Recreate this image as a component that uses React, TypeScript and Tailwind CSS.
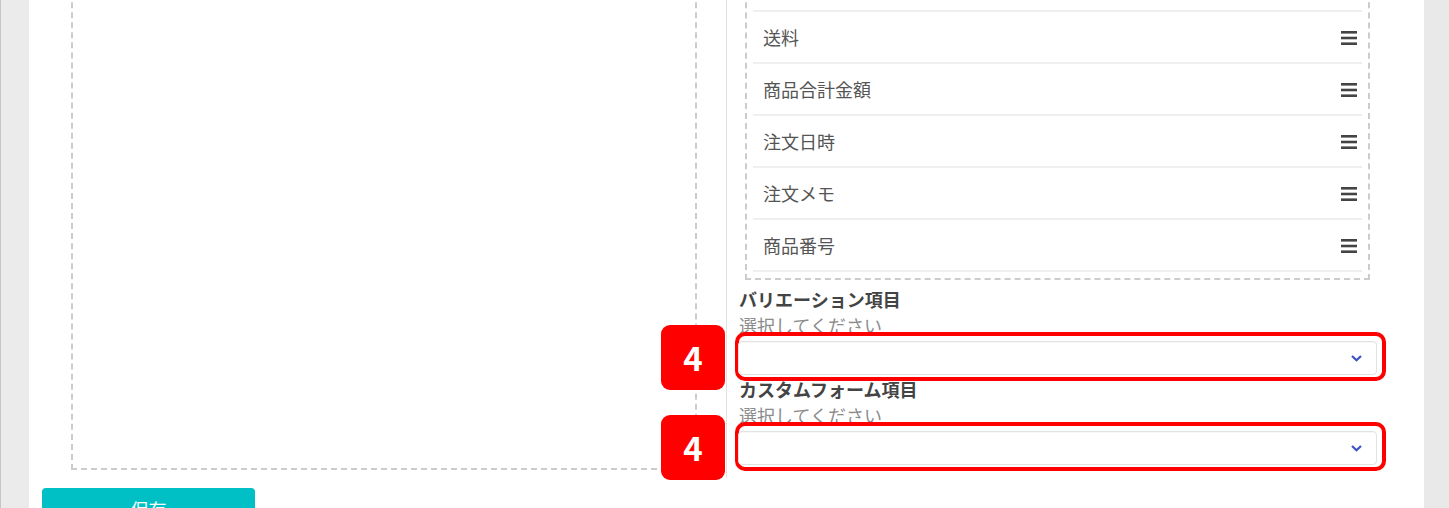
import React from "react";

const font = { fontFamily: '"Noto Sans CJK JP", "Noto Sans", sans-serif' };

// first row sits above the visible area; only its bottom divider shows
const rows = ["", "送料", "商品合計金額", "注文日時", "注文メモ", "商品番号"];

function Bars() {
  return (
    <svg width="16" height="14" viewBox="0 0 16 14" className="shrink-0">
      <rect x="0" y="0" width="16" height="2.6" fill="#444" />
      <rect x="0" y="5.7" width="16" height="2.6" fill="#444" />
      <rect x="0" y="11.4" width="16" height="2.6" fill="#444" />
    </svg>
  );
}

function Chevron() {
  return (
    <svg width="11" height="7" viewBox="0 0 11 7" className="shrink-0">
      <polyline points="1,1 5.5,5.3 10,1" fill="none" stroke="#3d52c4" strokeWidth="2.2" />
    </svg>
  );
}

function MarkedSelect() {
  return (
    <div className="relative -ml-[1px] mt-[3px] w-[639px]">
      <div className="absolute -top-[9px] -bottom-[6px] -left-[3px] -right-[9px] rounded-[10px] border-4 border-[#ff0000] bg-white" />
      <div className="absolute -top-[16px] -left-[77px] flex h-[65px] w-[64px] items-center justify-center rounded-[9px] bg-[#ff0000] text-[33px] font-bold leading-none text-white">
        4
      </div>
      <div className="relative z-10 flex h-[34px] items-center justify-end rounded-[4px] border border-[#e2e2e2] bg-white pr-[14px] shadow-[inset_0_1px_1px_rgba(0,0,0,0.03)]">
        <Chevron />
      </div>
    </div>
  );
}

export default function App() {
  return (
    <div className="flex h-[508px] overflow-hidden bg-[#e9e9e9]" style={font}>
      <div className="w-[29px] shrink-0 border-l border-[#c6c6c6] bg-[#ebebeb]" />
      <div className="flex-1 bg-white pl-[13px]">
        <div className="-mt-[48px] flex">
          <div className="flex w-[684px] shrink-0 flex-col">
            <div className="mx-[29px] mb-[7px] flex-1 border-2 border-dashed border-[#cccccc]" />
          </div>
          <div className="flex-1 border-l border-[#e0e0e0] pb-[12px] pl-[12px] pr-[47px]">
            <div className="ml-[6px] mr-[7px] border-2 border-dashed border-[#cccccc] px-[6px] pb-[6px] pt-[6px]">
              {rows.map((r, i) => (
                <div
                  key={i}
                  className="flex h-[52px] items-center justify-between border-b-2 border-[#efefef] pl-[10px] pr-[5px] pt-[1px] text-[18px] text-[#555]"
                >
                  <span>{r}</span>
                  <Bars />
                </div>
              ))}
            </div>
            <div className="mt-[6px] text-[18px] font-bold leading-[26px] text-[#444]">バリエーション項目</div>
            <div className="text-[18px] leading-[26px] text-[#8c8c8c]">選択してください</div>
            <MarkedSelect />
            <div className="mt-[1px] text-[18px] font-bold leading-[26px] text-[#444]">カスタムフォーム項目</div>
            <div className="text-[18px] leading-[26px] text-[#8c8c8c]">選択してください</div>
            <MarkedSelect />
          </div>
        </div>
        <button className="mt-[11px] flex h-[42px] w-[213px] items-center justify-center rounded-[4px] bg-[#00bfc5] text-[18px] text-white">
          保存
        </button>
      </div>
      <div className="w-[25px] shrink-0 bg-[#e9e9e9]" />
    </div>
  );
}
